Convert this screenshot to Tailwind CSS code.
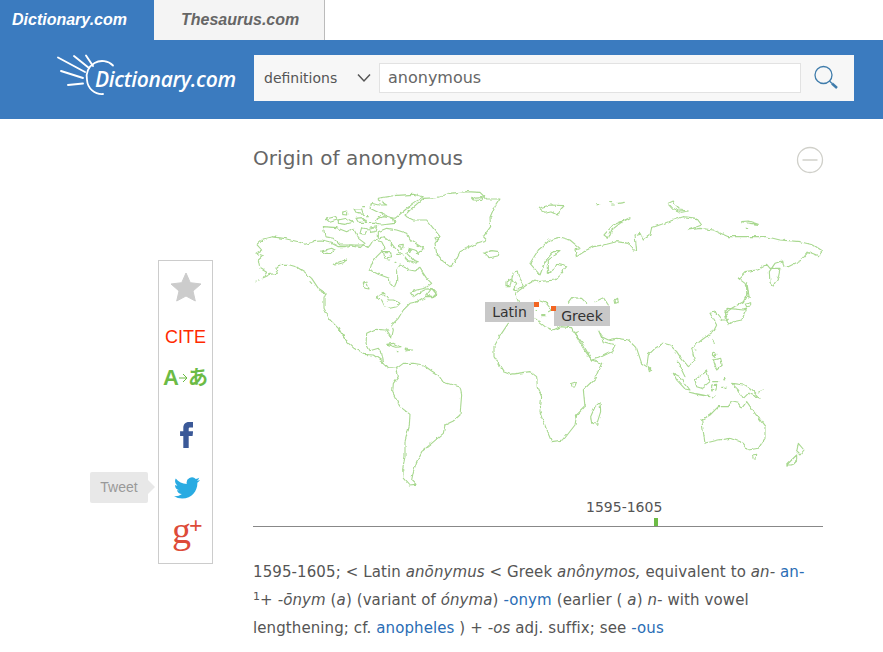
<!DOCTYPE html>
<html><head><meta charset="utf-8"><script src="https://cdn.jsdelivr.net/npm/@tailwindcss/browser@4"></script></head>
<body class="bg-white font-['DejaVu_Sans',sans-serif] text-[#555] overflow-hidden">
<div class="w-[883px] h-[652px] overflow-hidden">
  <div class="flex h-10">
    <div class="w-[154px] bg-[#3b7bbf] text-white font-['Liberation_Sans',sans-serif] font-bold italic text-[16px] leading-10 pl-3">Dictionary.com</div>
    <div class="w-[171px] bg-[#f4f4f4] border-r border-[#bbb] text-[#666] font-['Liberation_Sans',sans-serif] font-bold italic text-[16px] leading-10 pl-[27px]">Thesaurus.com</div>
  </div>
  <header class="h-[79px] bg-[#3b7bbf] flex items-start pt-[15px]">
    <div class="w-[254px] h-[46px] shrink-0 relative">
      <svg class="absolute left-0 top-[-15px]" width="120" height="79" viewBox="0 40 120 79" fill="none" stroke="#fff" stroke-width="1.900" stroke-linecap="round"><path d="M58 57.500 85 72M74 56 89 68M86 55.500 93 66M61 71 83 78M68 85 83 83.500"/><path d="M113 65.500A15.500 15.500 0 0 0 87 80 15 15 0 0 0 103 94" stroke-width="1.800"/></svg>
      <span class="absolute left-[95px] top-[8px] text-white font-['Open_Sans',sans-serif] italic font-semibold text-[21px] leading-8 tracking-[-0.3px]">Dictionary.com</span>
    </div>
    <div class="w-[600px] h-[46px] bg-[#f7f7f7] flex items-center">
      <span class="ml-[10px] w-[78px] text-[14px] text-[#555]">definitions</span>
      <svg class="ml-[14px]" width="16" height="10" viewBox="0 0 16 10" fill="none" stroke="#555" stroke-width="1.500"><path d="M2 1.500 8 8 14 1.500"/></svg>
      <div class="ml-[7px] w-[422px] h-[30px] bg-white border border-[#e2e2e2] pl-2 text-[16px] leading-7 text-[#666]">anonymous</div>
      <svg class="ml-[11px]" width="28" height="28" viewBox="0 0 28 28" fill="none" stroke="#3f7cab"><circle cx="11.500" cy="11" r="8.500" stroke-width="1.300"/><path d="M17.500 17 20 19.500" stroke-width="1.300"/><path d="M20 19.500 25 24" stroke-width="2.500"/></svg>
    </div>
  </header>
  <main class="flex">
    <aside class="w-[253px] shrink-0 pl-[158px] pt-[141px]">
      <div class="relative w-[55px] h-[304px] border border-[#ccc] flex flex-col items-center">
        <svg class="mt-[11px] shrink-0" width="32" height="30" viewBox="0 0 32 30"><path d="M16 1 20.300 10.700 31 12 23 19 25.300 29 16 24 6.700 29 9 19 1 12 11.700 10.700Z" fill="#ccc" stroke="#ccc" stroke-linejoin="round"/></svg>
        <span class="mt-[20px] text-[18px] leading-[30px] text-[#ff2a00] font-['Liberation_Sans',sans-serif]">CITE</span>
        <div class="mt-[13px] h-[26px] flex items-center text-[#6cbb45] font-bold font-['Liberation_Sans','Noto_Sans_CJK_JP',sans-serif] text-[20px] leading-none"><span class="text-[22px]">A</span><svg width="9" height="12" viewBox="0 0 9 12" fill="none" stroke="#6cbb45"><path d="M0 6H8M4 2 8 6 4 10"/></svg><span class="text-[20px]">あ</span></div>
        <svg class="mt-[31px] shrink-0" width="14" height="26" viewBox="5 0 13 24" preserveAspectRatio="none"><path d="M14 8.500V6.300c0-1 .5-1.300 1.400-1.300H18V0h-3.600C10.600 0 9 2.400 9 5.600v2.900H6V13h3v11h5V13h3.600l.5-4.500z" fill="#3b5998"/></svg>
        <svg class="mt-[29px] ml-[2px] shrink-0" width="26" height="22" viewBox="0 2 24 20"><path d="M23.953 4.570a10 10 0 01-2.825.775 4.958 4.958 0 002.163-2.723c-.951.555-2.005.959-3.127 1.184a4.920 4.920 0 00-8.384 4.482C7.690 8.095 4.067 6.130 1.640 3.162a4.822 4.822 0 00-.666 2.475c0 1.710.870 3.213 2.188 4.096a4.904 4.904 0 01-2.228-.616v.06a4.923 4.923 0 003.946 4.827 4.996 4.996 0 01-2.212.085 4.936 4.936 0 004.604 3.417 9.867 9.867 0 01-6.102 2.105c-.39 0-.779-.023-1.170-.067a13.995 13.995 0 007.557 2.209c9.053 0 13.998-7.496 13.998-13.985 0-.21 0-.42-.015-.63A9.935 9.935 0 0024 4.590z" fill="#29abe2"/></svg>
        <div class="mt-[20px] h-[32px] w-full relative text-[#dd4b39] font-['Liberation_Serif',serif]">
          <span class="absolute left-[13px] top-[-6px] text-[38px] leading-[34px]">g</span>
          <span class="absolute left-[30px] top-[-4px] text-[24px] font-bold leading-[20px]">+</span>
        </div>
        <div class="absolute left-[-69px] top-[211px] w-[58px] h-[31px] bg-[#e8e8e8] rounded-[2px] text-[#999] font-['Liberation_Sans',sans-serif] text-[14px] leading-[31px] text-center">Tweet<span class="absolute left-[58px] top-[8px] w-0 h-0 border-y-[7px] border-y-transparent border-l-[7px] border-l-[#e8e8e8]"></span></div>
      </div>
    </aside>
    <section class="w-[570px] shrink-0">
      <div class="flex items-center justify-between h-[71px] pt-[6px]">
        <h1 class="text-[20px] tracking-[0.05px] text-[#666] font-normal">Origin of anonymous</h1>
        <svg width="28" height="28" viewBox="0 0 28 28" fill="none" stroke="#d0d0ca" stroke-width="1.300" class="mt-[4px] translate-x-[1px]"><circle cx="14" cy="14" r="12.500"/><path d="M6.500 14H21.500" stroke-width="1.500"/></svg>
      </div>
      <div class="relative h-[300px]">
        <svg width="570" height="300" viewBox="253 190 570 300" fill="none" stroke="#a8d88f" stroke-width="3.300" stroke-linejoin="round" stroke-linecap="round">
          <defs><filter id="w" filterUnits="userSpaceOnUse" x="253" y="190" width="570" height="300"><feTurbulence type="fractalNoise" baseFrequency=".18" numOctaves="2" seed="4"/><feDisplacementMap in="SourceGraphic" scale="3.500" xChannelSelector="R" yChannelSelector="G"/></filter></defs>
          <g filter="url(#w)">
          <g transform="translate(250 185) scale(.33333)">
            <path d="M40 278 62 268 82 265 78 252 92 238 112 238 140 246 165 262 185 280 205 310 228 325 222 340 222 370 240 405 265 430 290 470 312 490 340 508 370 510 395 528 415 548 440 550 M415 548 400 530 395 505 385 490 360 497 348 475 350 445 375 433 410 435 425 458 430 435 425 420 445 400 460 375 480 355 500 350 525 335 555 335 560 328 545 310 530 312 510 322 490 335 480 322 500 315 525 310 545 295 530 280 510 250 495 258 480 255 450 240 440 255 440 290 432 308 420 295 418 280 385 268 360 255 365 235 380 215 395 200 405 190 395 170 370 165 362 178 352 190 340 180 320 180 300 180 285 185 265 185 245 175 215 168 190 170 165 178 145 170 100 160 65 155 40 162 20 178 35 195 18 205 40 212 25 225 30 250 50 262 40 278"/>
            <path d="M440 550 460 535 490 535 520 540 545 558 565 570 580 592 630 606 635 630 630 690 610 708 585 720 580 745 545 775 515 800 500 830 490 860 485 885 498 898 478 900 460 880 458 850 465 815 465 770 478 720 480 688 450 665 428 622 430 595 445 575 440 550"/>
            <path d="M385 140 410 130 440 135 470 145 480 165 520 190 505 208 495 195 475 190 470 205 490 225 505 230 495 232 470 225 455 205 440 195 420 170 400 155 385 160Z"/>
            <path d="M220 125 260 128 290 140 310 130 325 160 345 175 330 185 305 180 270 180 250 160 225 155Z"/>
            <path d="M385 40 430 32 490 28 520 35 490 55 465 75 435 100 415 95 390 85 360 70 365 55 385 60 410 60 385 45Z"/>
            <path d="M228 102 255 95 262 105 240 112Z M265 105 290 100 310 112 285 118 265 115Z M312 72 335 72 340 88 320 85Z M275 82 290 78 290 90 275 88Z M318 100 340 98 350 112 325 112Z M375 105 400 95 430 100 435 115 395 120 380 118Z M355 130 380 125 375 140 360 142Z M335 128 352 132 345 148 330 145Z M358 115h16M350 95h8M338 65h3M385 95h6M445 180 460 178 458 190 447 188Z M400 200 420 200 425 215 405 220Z M475 192 485 195 478 200Z M440 208h8M415 225h4M435 232h3"/>
            <path d="M465 90 480 75 520 40 560 38 600 25 650 20 690 22 710 42 750 42 735 65 720 100 722 125 700 155 710 165 680 175 630 200 612 235 600 245 580 230 560 205 555 175 570 155 550 130 530 105 490 105 470 95Z"/>
            <path d="M665 40 700 38 695 46 670 45ZM555 155 568 160 560 170ZM702 205 725 197 748 200 745 212 720 218Z"/>
            <path d="M268 428 285 460 290 472 280 455ZM378 338 400 325 410 335 415 345 430 345 450 355 440 365 420 370 405 365 395 345ZM410 478 430 475 450 485 440 487ZM465 492 485 495 470 498ZM442 497h5M530 330 545 310 560 325 550 335ZM500 352 525 342M250 238 290 222 285 232 255 240ZM215 198 245 190 255 195 245 205 225 205ZM340 295 350 290 357 312 345 310ZM205 315 228 328M180 290 185 295M18 291h1M28 285h3"/>
          </g>
          <g transform="translate(480 185) scale(.33333)">
            <path d="M105 325 140 300 165 285 175 290 225 285 260 245 230 238 225 250 205 265 205 225 240 200 220 200 195 230 180 270 150 235 175 195 210 165 240 157 270 165 300 190 285 195 290 215 320 195 340 185 380 178 410 170 445 175 460 195 470 195 465 150 480 145 490 165 510 150 515 128 545 118 580 105 610 95 650 100 665 120 625 135 660 130 700 135 745 155 800 155 860 155 900 165 960 170 1000 180 1028 198 1015 212 985 200 965 225 925 245 912 245 908 228 885 235 868 260 870 295 878 305 895 275 900 250 870 250 860 238 830 255 795 260 775 280 795 295 805 320 790 350 755 370 735 385 745 405 725 405 705 380 690 385 710 420 700 440 665 465 635 490 645 530 625 545 600 515 590 500 570 480 550 475 525 490 505 510 500 545 485 535 470 490 445 465 410 460 385 465 365 455 355 435 370 470 405 480 395 500 355 520 335 525 310 480 283 445 295 440"/>
            <path d="M85 415 65 445 42 485 42 515 70 560 90 568 150 560 170 575 172 605 185 635 180 680 200 735 215 770 250 765 285 720 290 690 315 665 310 615 345 580 365 535 335 525 310 490 283 445 275 428 240 425 220 435 195 425 165 400M180 345 195 350 215 375 205 380M262 355 275 338 305 340 320 355M345 350 370 338 385 360 M105 325 115 350"/>
            <path d="M100 262 112 258 115 275 130 300 115 312 100 315 110 295 95 280ZM78 290 95 282 90 305 78 305ZM185 392h10M165 376h3"/>
            <path d="M372 150 400 120 450 98 420 115 395 135 385 160ZM175 70 210 60 250 62 240 72 235 90 215 80 195 85ZM350 56h10M392 50h3M395 60h8M415 55 433 52M565 55 580 48 585 60 600 75 625 78 605 82 580 72ZM785 110 805 108 835 118 810 115ZM797 130h6M405 345 413 340 415 352 407 355Z"/>
            <path d="M800 290 808 340 800 335ZM735 380 745 370 790 375 800 372 785 405 760 410 745 420 740 405ZM795 355 815 350 815 362 800 365Z"/>
            <path d="M360 652 362 680 350 718 335 715 332 695 345 665ZM505 545 515 555 508 560ZM275 595 290 590 285 603 275 603ZM580 565 600 575 630 615 615 612 590 585ZM628 622 670 630 690 635 660 630ZM695 640 705 632M645 585 680 558 690 590 665 610 650 605ZM698 590h20M733 580 737 588M695 600 710 598 708 615 695 618ZM725 607h3M735 607h3M700 502 708 505 705 518 697 510ZM700 525 722 520 727 540 710 555ZM755 595 790 600 815 615 840 640 805 625 790 640 775 615ZM835 622 850 615M592 528 615 575M698 465 703 472M645 492h3"/>
            <path d="M665 705 690 690 715 665 745 665 755 650 775 655 785 670 800 650 825 685 855 725 855 760 835 790 805 795 790 775 750 760 715 765 675 775 670 740ZM817 810 830 808 828 822 820 822ZM955 775 972 795 960 810 950 800ZM920 840 950 810 950 825 935 840Z"/>
          </g>
          </g>
        </svg>
        <span class="absolute left-[232px] top-[112px] w-[49px] h-5 bg-[#c8c8c8] text-[#333] text-[14px] leading-5 text-center">Latin</span>
        <span class="absolute left-[281px] top-[112px] w-[5px] h-[5px] bg-[#f26522]"></span>
        <span class="absolute left-[301px] top-[116px] w-[56px] h-5 bg-[#c8c8c8] text-[#333] text-[14px] leading-5 text-center">Greek</span>
        <span class="absolute left-[298px] top-[116px] w-[5px] h-[5px] bg-[#f26522]"></span>
      </div>
      <div class="relative h-[37px] border-b border-[#888]">
        <span class="absolute left-[333px] top-[7px] text-[14px] leading-5">1595-1605</span>
        <span class="absolute left-[401px] top-[28px] w-[4px] h-[8px] bg-[#6cbb45]"></span>
      </div>
      <p class="mt-[31px] w-[570px] text-[15px] tracking-[0.1px] leading-[28px]">1595-1605; &lt; Latin <i>anōnymus</i> &lt; Greek <i>anônymos,</i> equivalent to <i>an-</i> <a class="text-[#2a6db5]">an-</a><br><sup class="text-[11px] leading-none">1</sup>+ <i>-ōnym</i> (<i>a</i>) (variant of <i>ónyma</i>) <a class="text-[#2a6db5]">-onym</a> (earlier ( <i>a</i>) <i>n-</i> with vowel<br>lengthening; cf. <a class="text-[#2a6db5]">anopheles</a> ) + <i>-os</i> adj. suffix; see <a class="text-[#2a6db5]">-ous</a></p>
    </section>
  </main>
</div>
</body></html>
